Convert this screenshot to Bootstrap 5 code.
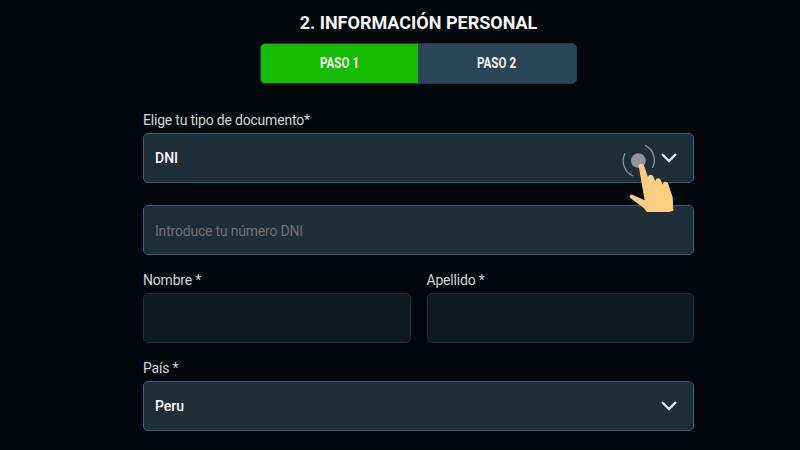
<!DOCTYPE html>
<html lang="es">
<head>
  <meta charset="UTF-8" />
  <title>Información personal</title>
  <meta name="viewport" content="width=device-width, initial-scale=1" />
  <link href="https://cdn.jsdelivr.net/npm/bootstrap@5.3.3/dist/css/bootstrap.min.css" rel="stylesheet" />
  <style>
    html, body {
      height: 450px;
      overflow: hidden;
    }
    body {
      background-color: #02070b;
      color: #fff;
      font-family: Roboto, sans-serif;
    }
    .reg-form {
      width: 551px;
      margin-left: 143px;
    }
    .reg-title {
      font-family: Roboto, sans-serif;
      font-size: 18px;
      font-weight: 700;
      line-height: 22px;
      color: #f4f6f7;
      margin: 0;
      padding-top: 12px;
      text-align: center;
    }
    .step-bar {
      width: 317px;
      height: 41px;
      margin: 9px auto 0 117px;
      border-radius: 5px;
      overflow: hidden;
      background-color: #2a4656;
      border: 1px solid #1f3a47;
    }
    .step-item {
      flex: 1 1 0;
      font-size: 14px;
      font-weight: 700;
      color: #f2f5f6;
    }
    .step-item span {
      display: inline-block;
      transform: scaleX(.83);
    }
    .step-item.is-active {
      flex: 0 0 157px;
      background-color: #17bd00;
    }
    .field-group {
      margin-top: 17px;
    }
    .field-group.is-first {
      margin-top: 28px;
    }
    .field-label {
      display: block;
      font-size: 14px;
      letter-spacing: -.2px;
      line-height: 16px;
      color: #d2d5d6;
      margin-bottom: 5px;
    }
    .form-control.field-box,
    .form-select.field-box {
      height: 50px;
      border-radius: 5px;
      font-size: 14px;
      letter-spacing: -.2px;
      padding: 1px 11px 0;
      color: #fff;
      background-color: #1e2e39;
      border: 1px solid #2f6075;
      box-shadow: none;
    }
    .form-select.field-box {
      font-weight: 500;
      letter-spacing: 0;
      background-image: url("data:image/svg+xml,%3csvg xmlns='http://www.w3.org/2000/svg' viewBox='0 0 16 10'%3e%3cpath fill='none' stroke='%23e6e8e9' stroke-width='2.3' d='M1 1l7 7 7-7'/%3e%3c/svg%3e");
      background-size: 16px 10px;
      background-position: right 16px center;
    }
    .form-control.field-box::placeholder {
      color: #6b7377;
      opacity: 1;
    }
    .form-control.field-box.is-empty {
      background-color: #0f1a1f;
      border-color: #1c2f3a;
    }
    .doc-number {
      margin-top: 22px;
    }
    .select-wrap {
      position: relative;
    }
    .tap-hand {
      position: absolute;
      left: 472px;
      top: 7px;
      pointer-events: none;
    }
  </style>
</head>
<body>
  <form class="reg-form">
    <h2 class="reg-title">2. INFORMACIÓN PERSONAL</h2>

    <div class="step-bar d-flex">
      <div class="step-item is-active d-flex align-items-center justify-content-center"><span>PASO 1</span></div>
      <div class="step-item d-flex align-items-center justify-content-center"><span>PASO 2</span></div>
    </div>

    <div class="field-group is-first">
      <label class="field-label" for="docType">Elige tu tipo de documento*</label>
      <div class="select-wrap">
        <select class="form-select field-box" id="docType">
          <option>DNI</option>
        </select>
        <!-- tap hint over the select -->
        <svg class="tap-hand" width="65" height="72" viewBox="0 0 195 216" aria-hidden="true">
          <path d="M30 40A50 50 0 0 0 54 108" fill="none" stroke="#8a9398" stroke-width="4"/>
          <path d="M91 16A50 50 0 0 1 112 84" fill="none" stroke="#8a9398" stroke-width="4"/>
          <circle cx="70" cy="62" r="22" fill="#8f979c"/>
          <path d="M71 78c0-9 14-9 16-1l12 35c1-6 4-8 8-8 5 0 8 3 9 8l5 12c1-6 4-9 8-9 5 0 8 3 9 8l5 11c1-7 4-9 8-9 5 0 8 3 9 8l13 38 2 41-66 21-22-28-42-32c-3-5 2-11 7-9l37 17z" fill="#fbcf7f"/>
        </svg>
      </div>
    </div>

    <input class="form-control field-box doc-number" type="text" placeholder="Introduce tu número DNI" />

    <div class="d-flex gap-3 field-group">
      <div class="flex-fill w-50">
        <label class="field-label" for="firstName">Nombre *</label>
        <input class="form-control field-box is-empty" id="firstName" type="text" />
      </div>
      <div class="flex-fill w-50">
        <label class="field-label" for="lastName">Apellido *</label>
        <input class="form-control field-box is-empty" id="lastName" type="text" />
      </div>
    </div>

    <div class="field-group">
      <label class="field-label" for="country">País *</label>
      <select class="form-select field-box" id="country">
        <option>Peru</option>
      </select>
    </div>
  </form>

  <script src="https://cdn.jsdelivr.net/npm/bootstrap@5.3.3/dist/js/bootstrap.bundle.min.js"></script>
</body>
</html>
